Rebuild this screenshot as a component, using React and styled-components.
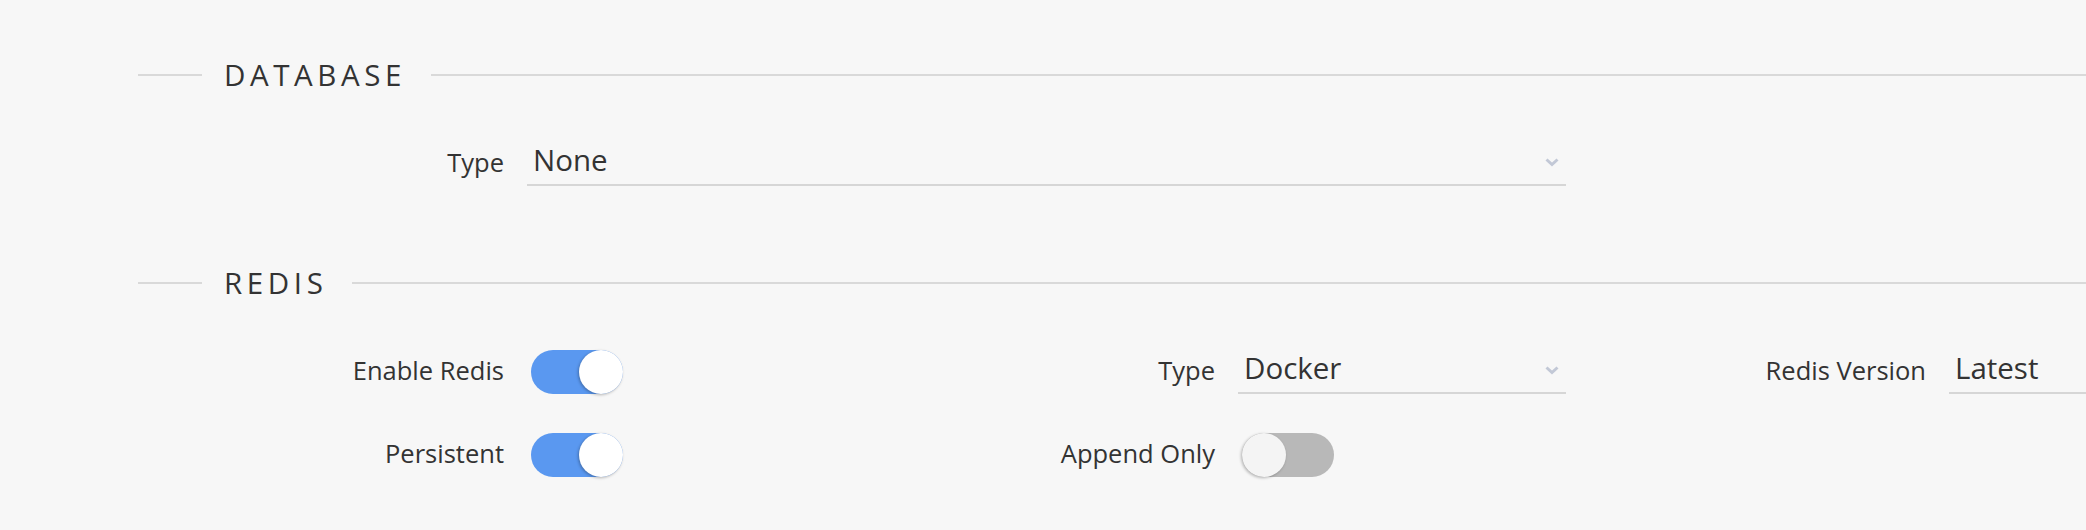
import React from "react";
import styled, { createGlobalStyle } from "styled-components";

const GlobalStyle = createGlobalStyle`
  html, body {
    margin: 0;
    padding: 0;
    background: #f7f7f7;
    overflow: hidden;
  }
  body {
    font-family: "Open Sans", "Noto Sans", Arial, sans-serif;
    color: #333333;
  }
`;

const Page = styled.div`
  width: 100%;
  min-height: 530px;
  padding-top: 55px;
  box-sizing: border-box;
  background: #f7f7f7;
`;

const Section = styled.section`
  padding-left: 138px;
  margin-bottom: ${(p) => p.$gapAfter || 0}px;
`;

const Heading = styled.div`
  display: flex;
  align-items: center;
  height: 40px;
`;

const LeadLine = styled.span`
  display: block;
  width: 64px;
  height: 2px;
  background: #d9d9d9;
  flex: none;
`;

const TailLine = styled.span`
  display: block;
  flex: 1;
  height: 2px;
  background: #d9d9d9;
`;

const Title = styled.h2`
  margin: 0 25px 0 22px;
  font-size: 29.5px;
  line-height: 40px;
  font-weight: 400;
  letter-spacing: 4.6px;
  color: #333333;
  white-space: nowrap;
`;

const FieldGrid = styled.div`
  display: grid;
  grid-template-columns: repeat(3, 383px 328px);
  row-gap: 39px;
  margin-top: 47px;
  margin-left: 6px;
  width: max-content;
`;

const Label = styled.label`
  align-self: center;
  text-align: right;
  padding-right: 23px;
  padding-bottom: 4px;
  font-size: 25.5px;
  line-height: 40px;
  color: #333333;
  white-space: nowrap;
`;

const Cell = styled.div`
  display: flex;
  align-items: center;
  height: 44px;
  grid-column: span ${(p) => p.$span || 1};
`;

const SelectBox = styled.div`
  position: relative;
  width: 100%;
  height: 44px;
  box-sizing: border-box;
  border-bottom: 2px solid #d6d6d6;
  padding-left: 6px;
  font-size: 29.5px;
  line-height: 36px;
  color: #333333;
  white-space: nowrap;
`;

const Chevron = styled.svg`
  position: absolute;
  right: 7px;
  top: 16px;
  width: 14px;
  height: 9px;
`;

const Track = styled.div`
  margin-left: 4px;
  width: 92px;
  height: 44px;
  border-radius: 22px;
  background: ${(p) => (p.$on ? "#5a98f0" : "#b8b8b8")};
  display: flex;
  justify-content: ${(p) => (p.$on ? "flex-end" : "flex-start")};
`;

const Knob = styled.span`
  display: block;
  width: 44px;
  height: 44px;
  border-radius: 50%;
  background: ${(p) => (p.$on ? "#ffffff" : "#f4f4f4")};
  box-shadow: -1px 1px 3px rgba(0, 0, 0, 0.28);
`;

const Select = ({ value, arrow = true }) => (
  <SelectBox>
    {value}
    {arrow && (
      <Chevron viewBox="0 0 14 9">
        <polyline
          points="1.5,1.5 7,6.5 12.5,1.5"
          fill="none"
          stroke="#c2c8d6"
          strokeWidth="3"
        />
      </Chevron>
    )}
  </SelectBox>
);

const Toggle = ({ on }) => (
  <Track $on={on}>
    <Knob $on={on} />
  </Track>
);

export default function App() {
  return (
    <>
      <GlobalStyle />
      <Page>
        <Section $gapAfter={77}>
          <Heading>
            <LeadLine />
            <Title>DATABASE</Title>
            <TailLine />
          </Heading>
          <FieldGrid>
            <Label>Type</Label>
            <Cell $span={3}>
              <Select value="None" />
            </Cell>
          </FieldGrid>
        </Section>
        <Section>
          <Heading>
            <LeadLine />
            <Title>REDIS</Title>
            <TailLine />
          </Heading>
          <FieldGrid>
            <Label>Enable Redis</Label>
            <Cell>
              <Toggle on />
            </Cell>
            <Label>Type</Label>
            <Cell>
              <Select value="Docker" />
            </Cell>
            <Label>Redis Version</Label>
            <Cell>
              <Select value="Latest" />
            </Cell>
            <Label>Persistent</Label>
            <Cell>
              <Toggle on />
            </Cell>
            <Label>Append Only</Label>
            <Cell>
              <Toggle on={false} />
            </Cell>
          </FieldGrid>
        </Section>
      </Page>
    </>
  );
}
